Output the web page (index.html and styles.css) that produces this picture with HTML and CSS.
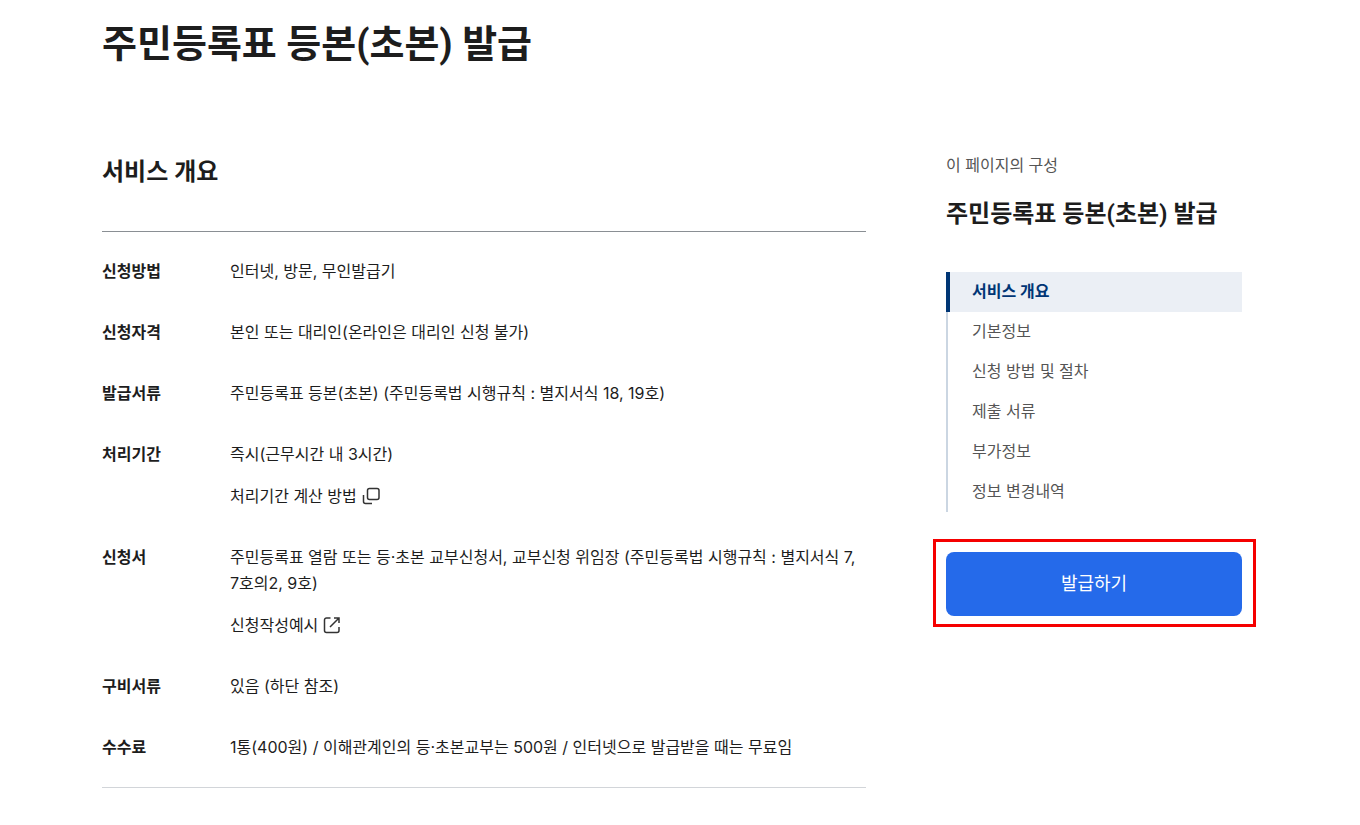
FILE: index.html
```html
<!DOCTYPE html>
<html lang="ko">
<head>
  <meta charset="UTF-8">
  <meta name="viewport" content="width=device-width, initial-scale=1">
  <title>주민등록표 등본(초본) 발급</title>
  <link rel="stylesheet" href="styles.css">
</head>
<body>

<div class="container">
  <h1 class="page-title">주민등록표 등본(초본) 발급</h1>

  <div class="layout">
    <main class="content">
      <h2 class="section-title">서비스 개요</h2>

      <dl class="info-list">
        <div class="info-row">
          <dt>신청방법</dt>
          <dd>인터넷, 방문, 무인발급기</dd>
        </div>
        <div class="info-row">
          <dt>신청자격</dt>
          <dd>본인 또는 대리인(온라인은 대리인 신청 불가)</dd>
        </div>
        <div class="info-row">
          <dt>발급서류</dt>
          <dd>주민등록표 등본(초본) (주민등록법 시행규칙 : 별지서식 18, 19호)</dd>
        </div>
        <div class="info-row">
          <dt>처리기간</dt>
          <dd>
            <p>즉시(근무시간 내 3시간)</p>
            <a href="#" class="info-link">처리기간 계산 방법
              <svg class="icon" viewBox="0 0 20 20" aria-hidden="true">
                <rect x="6.5" y="2.5" width="11.5" height="11" rx="2"/>
                <path d="M2.5 9v6.5a2 2 0 0 0 2 2H11"/>
              </svg>
            </a>
          </dd>
        </div>
        <div class="info-row">
          <dt>신청서</dt>
          <dd>
            <p>주민등록표 열람 또는 등·초본 교부신청서, 교부신청 위임장 (주민등록법 시행규칙 : 별지서식 7, 7호의2, 9호)</p>
            <a href="#" class="info-link">신청작성예시
              <svg class="icon" viewBox="0 0 20 20" aria-hidden="true">
                <path d="M8.5 3H4.500a2 2 0 0 0-2 2v10.500a2 2 0 0 0 2 2h10.500a2 2 0 0 0 2-2V12"/>
                <path d="M12 3h5v5M17 3L8 12"/>
              </svg>
            </a>
          </dd>
        </div>
        <div class="info-row">
          <dt>구비서류</dt>
          <dd>있음 (하단 참조)</dd>
        </div>
        <div class="info-row">
          <dt>수수료</dt>
          <dd>1통(400원) / 이해관계인의 등·초본교부는 500원 / 인터넷으로 발급받을 때는 무료임</dd>
        </div>
      </dl>
    </main>

    <aside class="side">
      <p class="side-label">이 페이지의 구성</p>
      <h2 class="side-title">주민등록표 등본(초본) 발급</h2>
      <nav class="side-nav">
        <a href="#" class="active">서비스 개요</a>
        <a href="#">기본정보</a>
        <a href="#">신청 방법 및 절차</a>
        <a href="#">제출 서류</a>
        <a href="#">부가정보</a>
        <a href="#">정보 변경내역</a>
      </nav>
      <div class="issue">
        <button type="button" class="issue-btn">발급하기</button>
      </div>
    </aside>
  </div>
</div>

</body>
</html>
```
FILE: styles.css
```css
* {
  box-sizing: border-box;
}
body {
  margin: 0;
  padding: 0 16px 0 0;
  background: #fff;
  color: #1d1d1d;
  font-family: Inter, "Noto Sans CJK KR", sans-serif;
  font-size: 16px;
  line-height: 26px;
  word-break: keep-all;
}
h1, h2, p, dl, dd {
  margin: 0;
}
h1, h2 {
  font-family: Roboto, "Noto Sans CJK KR", sans-serif;
  font-weight: 700;
}
a {
  color: inherit;
  text-decoration: none;
}
.container {
  max-width: 1140px;
  margin: 0 auto;
  padding: 14px 0 36px;
}
.page-title {
  font-size: 38px;
  line-height: 60px;
}
.layout {
  display: grid;
  grid-template-columns: minmax(0, 1fr) 296px;
  gap: 80px;
  margin-top: 78px;
}
.section-title {
  font-size: 24px;
  line-height: 40px;
}

/* Service overview */
.info-list {
  display: flex;
  flex-direction: column;
  gap: 35px;
  margin-top: 39px;
  padding: 26px 0 27px;
  border-top: 1px solid #8a8f94;
  border-bottom: 1px solid #d2d5d9;
}
.info-row {
  display: grid;
  grid-template-columns: 128px minmax(0, 1fr);
}
.info-row dt {
  font-weight: 700;
}
.info-link {
  display: inline-flex;
  align-items: center;
  gap: 4px;
  margin-top: 16px;
  vertical-align: top;
}
.icon {
  width: 20px;
  height: 20px;
  fill: none;
  stroke: #333;
  stroke-width: 1.5;
}

/* Side navigation */
.side-label {
  color: #555;
}
.side-title {
  margin-top: 16px;
  font-size: 24px;
  line-height: 40px;
  white-space: nowrap;
}
.side-nav {
  display: flex;
  flex-direction: column;
  margin-top: 38px;
}
.side-nav a {
  padding: 6px 0 8px 24px;
  border-left: 2px solid #cbd6e2;
  color: #555;
}
.side-nav a.active {
  padding-left: 22px;
  border-left: 4px solid #003675;
  background: #ebeff5;
  color: #003675;
  font-weight: 700;
}
.issue {
  position: relative;
  margin-top: 40px;
}
.issue::after {
  content: "";
  position: absolute;
  inset: -13px -14px -11px -13px;
  border: 3px solid #f50000;
  pointer-events: none;
}
.issue-btn {
  display: block;
  width: 100%;
  height: 64px;
  padding: 0 0 4px;
  border: none;
  border-radius: 8px;
  background: #256aea;
  color: #fff;
  font-family: inherit;
  font-size: 18px;
  font-weight: 400;
  cursor: pointer;
}
```
